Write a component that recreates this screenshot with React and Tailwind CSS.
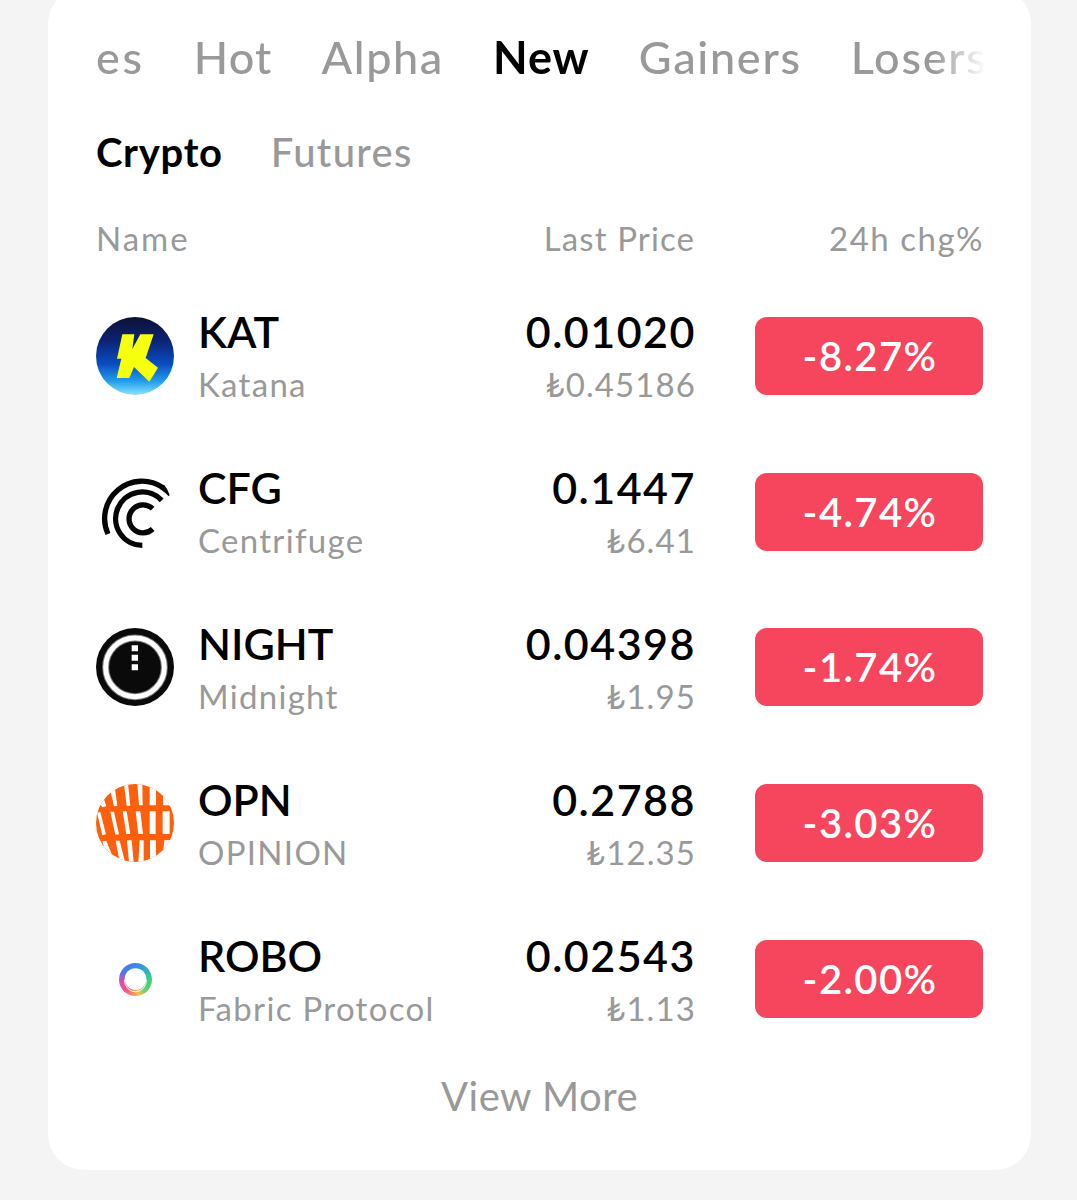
const tabs = [
  { label: "es", className: "font-medium tracking-[2.7px] text-[#999]" },
  { label: "Hot", className: "font-medium tracking-[1.2px] text-[#999]" },
  { label: "Alpha", className: "font-medium tracking-[1.6px] text-[#999]" },
  { label: "New", className: "font-bold tracking-[1px] text-black" },
  { label: "Gainers", className: "font-medium tracking-[1.7px] text-[#999]" },
  { label: "Losers", className: "font-medium tracking-[1.7px] text-[#999]" },
];

function KatanaIcon() {
  return (
    <svg viewBox="0 0 234 234" className="size-full">
      <defs>
        <linearGradient id="kat" x1="0" y1="0" x2="0" y2="1">
          <stop offset="0" stopColor="#0d1033" />
          <stop offset="0.3" stopColor="#0c2273" />
          <stop offset="0.6" stopColor="#0a4cc0" />
          <stop offset="0.82" stopColor="#1f9cec" />
          <stop offset="1" stopColor="#8be4fb" />
        </linearGradient>
      </defs>
      <circle cx="117" cy="117" r="117" fill="url(#kat)" />
      <path
        d="M79 52H115L109 96L133 52H173L149 123L186 152L160 194L114 150L100 183H62L76 125H63Z"
        fill="#f6ff0d"
      />
    </svg>
  );
}

function CentrifugeIcon() {
  return (
    <svg viewBox="0 0 234 234" className="size-full">
      <g fill="none" stroke="#050505" strokeWidth="16">
        <path d="M170 107A42 42 0 1 0 170 168" />
        <path d="M197 82A80 80 0 1 0 139 217" />
        <path d="M36 183A112 112 0 0 1 201 44" />
      </g>
      <path d="M205 37Q215 47 221 66L218 70Q208 59 193 49L197 38Z" fill="#050505" />
    </svg>
  );
}

function MidnightIcon() {
  return (
    <svg viewBox="0 0 234 234" className="size-full">
      <circle cx="117" cy="117" r="117" fill="#0a0a0a" />
      <circle cx="117" cy="118" r="88" fill="none" stroke="#777" strokeWidth="21" />
      <circle cx="117" cy="118" r="88" fill="none" stroke="#fff" strokeWidth="15" />
      <path d="M107 52h19v18h-19zM107 80h19v18h-19zM107 109h19v18h-19z" fill="#fff" />
    </svg>
  );
}

function OpinionIcon() {
  return (
    <svg viewBox="33 30 234 234" className="size-full">
      <defs>
        <clipPath id="opn">
          <circle cx="150" cy="147" r="117" />
        </clipPath>
      </defs>
      <g clipPath="url(#opn)">
        <rect x="33" y="30" width="234" height="234" fill="#fe5f0c" />
        <g fill="#fff">
          <path d="M44 86L56 72L64 97L52 100ZM76 48L90 44L97 96L87 97ZM117 30L129 28L136 95L125 95ZM157 28L172 28L173 94L162 94ZM194 30L213 30L213 94L194 94ZM234 50L250 50L256 94L234 94Z" />
          <path d="M36 116L46 114L63 181L52 184ZM76 113L87 113L102 181L91 182ZM113 112L125 112L136 180L124 180ZM152 112L166 112L174 180L160 180ZM194 112H212V180H194ZM233 112H254V180H233Z" />
          <path d="M52 202L64 200L84 250L66 250ZM92 200L104 200L120 264L104 264ZM126 199L140 199L146 264L132 264ZM164 199L176 199L176 264L160 264ZM195 199H213V264H195ZM238 199L258 198L248 240L234 240Z" />
        </g>
      </g>
    </svg>
  );
}

function FabricIcon() {
  return (
    <div className="flex size-full items-center justify-center">
      <div className="flex size-[33px] items-start justify-center rounded-full bg-[conic-gradient(#3a86f0,#35a8c8_12%,#39cf84_25%,#6bcf72_38%,#f2c14e_47%,#f58a62_53%,#f2508a_63%,#d94fb0_73%,#5a74e8_82%,#3a86f0)] pt-[5px]">
        <svg viewBox="0 0 23 25" className="h-[25px] w-[23px]" fill="none">
          <circle cx="11.5" cy="11" r="10.8" fill="#fff" />
          <path d="M0.5 12A11 11.8 0 0 0 22.5 12" stroke="#fff" strokeWidth="0.9" />
        </svg>
      </div>
    </div>
  );
}

const coins = [
  { symbol: "KAT", name: "Katana", price: "0.01020", local: "₺0.45186", change: "-8.27%", Icon: KatanaIcon },
  { symbol: "CFG", name: "Centrifuge", price: "0.1447", local: "₺6.41", change: "-4.74%", Icon: CentrifugeIcon },
  { symbol: "NIGHT", name: "Midnight", price: "0.04398", local: "₺1.95", change: "-1.74%", Icon: MidnightIcon },
  { symbol: "OPN", name: "OPINION", price: "0.2788", local: "₺12.35", change: "-3.03%", Icon: OpinionIcon },
  { symbol: "ROBO", name: "Fabric Protocol", price: "0.02543", local: "₺1.13", change: "-2.00%", Icon: FabricIcon },
];

function CoinRow({ symbol, name, price, local, change, Icon }) {
  return (
    <li className="flex h-[155.8px] items-center">
      <div className="size-[78px] shrink-0">
        <Icon />
      </div>
      <div className="ml-6 flex flex-1 flex-col pt-[5px]">
        <span className="text-[43px] leading-[52px] font-semibold text-black">{symbol}</span>
        <span className="text-[33px] leading-[52px] tracking-[1.3px] text-[#999]">{name}</span>
      </div>
      <div className="flex flex-col items-end pt-[5px]">
        <span className="-mr-px text-[43px] leading-[52px] font-semibold tracking-[1.5px] text-black">{price}</span>
        <span className="-mr-px text-[33px] leading-[52px] tracking-[1.1px] text-[#999]">{local}</span>
      </div>
      <div className="ml-[60px] flex h-[78px] w-[228px] items-center justify-center rounded-xl bg-[#f6465d] pl-0.5 text-[40px] font-semibold tracking-[1.4px] text-white">
        {change}
      </div>
    </li>
  );
}

export default function App() {
  return (
    <div className="h-[1200px] overflow-hidden bg-[#f4f4f4] px-12 font-['Lato',sans-serif]">
      <div className="-mt-3 h-[1182px] w-[983px] rounded-[36px] bg-white px-12 pt-[22px]">

        {/* Market tabs, faded at the scroll edge */}
        <nav className="-mr-3 flex h-[95px] items-center gap-[49px] overflow-hidden mask-r-from-[838px] mask-r-to-[890px] text-[45px] whitespace-nowrap">
          {tabs.map((tab) => (
            <a key={tab.label} className={tab.className}>
              {tab.label}
            </a>
          ))}
        </nav>

        <nav className="flex h-[94px] items-center gap-12 text-[40px]">
          <a className="font-bold tracking-[0.7px] text-black">Crypto</a>
          <a className="font-medium tracking-[1.3px] text-[#999]">Futures</a>
        </nav>

        <div className="flex h-[79px] items-center text-[33px] tracking-[1.3px] text-[#999]">
          <span className="flex-1 tracking-[2px]">Name</span>
          <span className="tracking-[1.1px]">Last Price</span>
          <span className="-mr-px w-[289px] text-right tracking-[1.5px]">24h chg%</span>
        </div>

        <ul>
          {coins.map((coin) => (
            <CoinRow key={coin.symbol} {...coin} />
          ))}
        </ul>

        <div className="flex h-[78px] items-center justify-center text-[40px] tracking-[0.5px] text-[#999]">View More</div>
      </div>
    </div>
  );
}
